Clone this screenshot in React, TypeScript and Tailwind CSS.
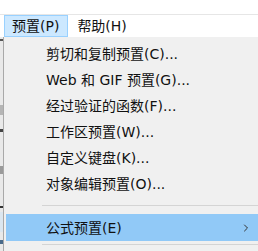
import { ChevronRight } from "lucide-react";

const items = [
  "剪切和复制预置(C)...",
  "Web 和 GIF 预置(G)...",
  "经过验证的函数(F)...",
  "工作区预置(W)...",
  "自定义键盘(K)...",
  "对象编辑预置(O)...",
];

export default function App() {
  return (
    <div
      className="flex h-[251px] w-[258px] flex-col overflow-hidden bg-white text-[14px] text-[#111]"
      style={{ fontFamily: '"DejaVu Sans", "Noto Sans CJK SC", sans-serif' }}
    >
      <div className="h-[15px] border-b border-[#e6e6e6]" />

      {/* menu bar */}
      <div className="flex h-[22px] items-stretch bg-white pl-[4px]">
        <div className="flex items-center border border-[#99d1ff] bg-[#cce8ff] pl-[7px] pr-[8px] leading-none">
          预置(P)
        </div>
        <div className="flex items-center pl-[9px] leading-none">帮助(H)</div>
      </div>

      <div className="flex flex-1">
        {/* window behind the menu */}
        <div className="flex w-[3px] flex-col bg-[#e9e9e9]">
          <div className="mt-[2px] h-[2px] bg-[#555]" />
          <div className="mt-[64px] h-[10px] bg-[#b5b5b5]" />
          <div className="mt-[14px] h-[3px] bg-[#444]" />
          <div className="mt-[34px] h-[8px] bg-[#9a9a9a]" />
          <div className="mt-[32px] h-[2px] bg-[#333]" />
          <div className="mt-[4px] h-[20px] bg-[#dbe6ef]" />
          <div className="mt-[8px] h-[4px] bg-[#4a6a8a]" />
        </div>

        {/* dropdown */}
        <div className="flex flex-1 flex-col border-l border-[#a9a9a9] bg-[#f0f0f0] pl-[2px] pt-[4px]">
          {items.map((label) => (
            <div key={label} className="flex h-[26px] items-center pl-[40px] leading-none">
              {label}
            </div>
          ))}
          <div className="flex h-[17px] items-center pl-[36px]">
            <div className="h-px flex-1 bg-[#d4d4d4]" />
          </div>
          <div className="flex h-[27px] items-center justify-between bg-[#91c9f7] pl-[40px] pr-[6px] leading-none">
            <span>公式预置(E)</span>
            <ChevronRight className="h-[12px] w-[12px] text-[#333]" strokeWidth={2} />
          </div>
          <div className="mt-[3px] flex pl-[36px]">
            <div className="h-px flex-1 bg-[#d4d4d4]" />
          </div>
        </div>
      </div>
    </div>
  );
}
